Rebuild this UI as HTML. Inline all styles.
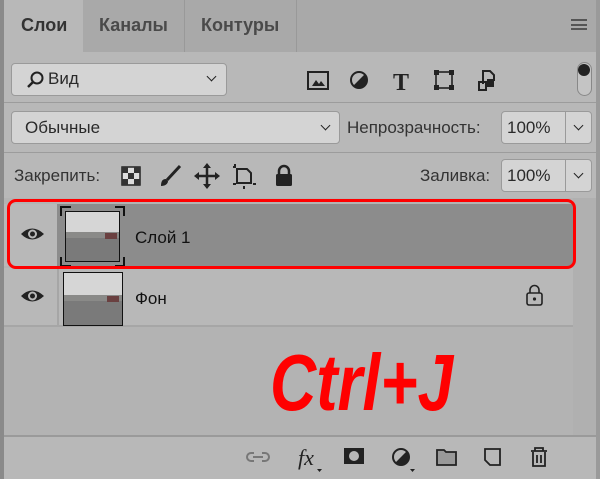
<!DOCTYPE html><html><head><meta charset="utf-8"><style>
*{margin:0;padding:0;box-sizing:border-box}
body{width:600px;height:479px;background:#b8b8b8;font-family:"Liberation Sans","DejaVu Sans",sans-serif;position:relative;overflow:hidden;color:#1e1e1e}
.a{position:absolute}
.box{position:absolute;background:#d4d4d4;border:1px solid #9a9a9a;border-radius:4px}
.chev{position:absolute;width:7px;height:7px;border-right:1.6px solid #222;border-bottom:1.6px solid #222;transform:rotate(45deg)}
.t{position:absolute;font-size:17px;color:#2a2a2a}
</style></head><body>
<div class="a" style="left:0;top:0;width:4px;height:479px;background:#8a8a8a"></div>
<div class="a" style="left:596px;top:0;width:4px;height:479px;background:#9a9a9a"></div>
<div class="a" style="left:4px;top:0;width:592px;height:52px;background:#a9a9a9"></div>
<div class="a" style="left:4px;top:0;width:79px;height:54px;background:#b8b8b8"></div>
<div class="a" style="left:184px;top:0;width:1px;height:52px;background:#999"></div>
<div class="a" style="left:296px;top:0;width:1px;height:52px;background:#999"></div>
<div class="t" style="left:21px;top:15px;font-weight:bold;font-size:18px;color:#333">Слои</div>
<div class="t" style="left:99px;top:15px;font-weight:bold;font-size:18px;color:#4a4a4a">Каналы</div>
<div class="t" style="left:201px;top:15px;font-weight:bold;font-size:18px;color:#4a4a4a">Контуры</div>
<div class="a" style="left:571px;top:19px;width:16px;height:11px;border-top:2px solid #555;border-bottom:2px solid #555"><div style="margin-top:2.5px;height:2px;background:#555"></div></div>

<div class="box" style="left:11px;top:63px;width:216px;height:33px"></div>
<svg class="a" style="left:26px;top:70px" width="20" height="20"><circle cx="11" cy="8" r="5.5" fill="none" stroke="#222" stroke-width="2"/><line x1="7" y1="12" x2="2" y2="17" stroke="#222" stroke-width="2.5"/></svg>
<div class="t" style="left:48px;top:69px">Вид</div>
<div class="chev" style="left:208px;top:73px"></div>
<svg class="a" style="left:305px;top:66px" width="200" height="28">
<rect x="3" y="6" width="20" height="17" fill="none" stroke="#222" stroke-width="2"/><path d="M7 20l4-6 3 4 2-3 4 5z" fill="#222"/>
<circle cx="54" cy="14" r="8" fill="none" stroke="#222" stroke-width="2"/><path d="M59.7 8.3A8 8 0 0 1 48.3 19.7z" fill="#222"/>
<text x="96" y="24" font-family="Liberation Serif" font-weight="bold" font-size="24" text-anchor="middle" fill="#222">T</text>
<rect x="131" y="6" width="16" height="16" fill="none" stroke="#222" stroke-width="1.6"/><g fill="#222"><rect x="129" y="4" width="5" height="5"/><rect x="144" y="4" width="5" height="5"/><rect x="129" y="19" width="5" height="5"/><rect x="144" y="19" width="5" height="5"/></g>
<path d="M178 18V5h7l4 4v6" fill="none" stroke="#222" stroke-width="2"/><rect x="174" y="16" width="7" height="8" fill="none" stroke="#222" stroke-width="2"/><rect x="182" y="13" width="7" height="8" fill="#222"/>
</svg>
<div class="a" style="left:577px;top:62px;width:15px;height:34px;border:1.5px solid #888;border-radius:8px;background:#c4c4c4"><div style="width:12px;height:12px;border-radius:6px;background:#222;margin-top:1px"></div></div>
<div class="a" style="left:4px;top:102px;width:592px;height:1px;background:#9c9c9c"></div>

<div class="box" style="left:11px;top:111px;width:329px;height:33px"></div>
<div class="t" style="left:25px;top:118px">Обычные</div>
<div class="chev" style="left:322px;top:122px"></div>
<div class="t" style="left:347px;top:118px;color:#333">Непрозрачность:</div>
<div class="box" style="left:501px;top:111px;width:91px;height:33px"></div>
<div class="a" style="left:565px;top:112px;width:1px;height:31px;background:#9a9a9a"></div>
<div class="t" style="left:507px;top:118px">100%</div>
<div class="chev" style="left:575px;top:122px"></div>
<div class="a" style="left:4px;top:152px;width:592px;height:1px;background:#9c9c9c"></div>

<div class="t" style="left:14px;top:166px;color:#333">Закрепить:</div>
<svg class="a" style="left:120px;top:162px" width="180" height="28">
<rect x="2" y="5" width="18" height="18" fill="#ddd" stroke="#222" stroke-width="1.5"/><g fill="#333"><rect x="2" y="5" width="6" height="6"/><rect x="14" y="5" width="6" height="6"/><rect x="8" y="11" width="6" height="6"/><rect x="2" y="17" width="6" height="6"/><rect x="14" y="17" width="6" height="6"/></g>
<path d="M60 4L47 18" stroke="#222" stroke-width="3"/><path d="M46 17c-4 0-5 3-5 7 4 0 7-2 7-5z" fill="#222"/>
<path d="M87 3v22M76 14h22" stroke="#222" stroke-width="2.5"/><path d="M87 1l-4 5h8zM87 27l-4-5h8zM74 14l5-4v8zM100 14l-5-4v8z" fill="#222"/>
<path d="M117 7h10l4 4v10h-14z" fill="none" stroke="#222" stroke-width="2"/><path d="M113 5h3M113 22h3M133 22h3M124 24v3M115 2v3" stroke="#222" stroke-width="2"/>
<rect x="156" y="12" width="16" height="12" rx="1.5" fill="#222"/><path d="M159 13v-4a5 5 0 0 1 10 0v4" fill="none" stroke="#222" stroke-width="2.5"/>
</svg>
<div class="t" style="left:420px;top:166px;color:#333">Заливка:</div>
<div class="box" style="left:501px;top:159px;width:91px;height:33px"></div>
<div class="a" style="left:565px;top:160px;width:1px;height:31px;background:#9a9a9a"></div>
<div class="t" style="left:507px;top:166px">100%</div>
<div class="chev" style="left:575px;top:170px"></div>

<div class="a" style="left:4px;top:198px;width:569px;height:239px;background:#b3b3b3"></div>
<div class="a" style="left:573px;top:198px;width:23px;height:239px;background:#b0b0b0"></div>
<div class="a" style="left:57px;top:204px;width:516px;height:62px;background:#8c8c8c"></div>
<div class="a" style="left:4px;top:204px;width:53px;height:62px;background:#b8b8b8"></div>
<div class="a" style="left:4px;top:268px;width:569px;height:57px;background:#b8b8b8"></div>
<div class="a" style="left:4px;top:325px;width:569px;height:2px;background:#a6a6a6"></div>
<div class="a" style="left:57px;top:268px;width:2px;height:58px;background:#a6a6a6"></div>
<div class="a" style="left:4px;top:435px;width:592px;height:2px;background:#9a9a9a"></div>

<svg class="a" style="left:20px;top:226px" width="26" height="16"><path d="M1 8Q12-3 24 8Q12 19 1 8z" fill="#222"/><circle cx="12.5" cy="8" r="4.5" fill="#b8b8b8"/><circle cx="12.5" cy="8" r="2.5" fill="#222"/></svg>
<svg class="a" style="left:20px;top:288px" width="26" height="16"><path d="M1 8Q12-3 24 8Q12 19 1 8z" fill="#222"/><circle cx="12.5" cy="8" r="4.5" fill="#b8b8b8"/><circle cx="12.5" cy="8" r="2.5" fill="#222"/></svg>

<svg class="a" style="left:60px;top:206px" width="66" height="62">
<path d="M1 10V1h10M55 1h9v9M1 51v9h10M55 60h9v-9" fill="none" stroke="#111" stroke-width="2"/>
<rect x="5" y="5" width="55" height="51" fill="#111"/>
<rect x="6" y="6" width="53" height="49" fill="#d6d6d6"/><rect x="6" y="30" width="53" height="25" fill="#7a7a7a"/><rect x="6" y="26" width="53" height="6" fill="#8a8a88"/><rect x="45" y="27" width="12" height="6" fill="#6a4040"/>
</svg>
<svg class="a" style="left:63px;top:272px" width="60" height="54">
<rect x="0" y="0" width="60" height="54" fill="#111"/>
<rect x="1" y="1" width="58" height="52" fill="#d6d6d6"/><rect x="1" y="27" width="58" height="26" fill="#7a7a7a"/><rect x="1" y="23" width="58" height="6" fill="#8a8a88"/><rect x="44" y="24" width="12" height="6" fill="#6a4040"/>
</svg>
<div class="t" style="left:135px;top:228px;color:#111">Слой 1</div>
<div class="t" style="left:135px;top:289px;color:#111">Фон</div>
<svg class="a" style="left:525px;top:284px" width="20" height="22"><rect x="2" y="9" width="15" height="12" rx="2" fill="none" stroke="#222" stroke-width="1.6"/><path d="M5 9V6a4.5 4.5 0 0 1 9 0v3" fill="none" stroke="#222" stroke-width="1.6"/><circle cx="9.5" cy="15" r="1.6" fill="#222"/></svg>

<div class="a" style="left:7px;top:199px;width:569px;height:70px;border:3px solid #f00;border-radius:9px"></div>

<div class="a" style="left:270px;top:343px;font-size:80px;font-weight:bold;font-style:italic;color:#f00;letter-spacing:0px;line-height:1;font-family:'Liberation Sans',sans-serif;transform:scaleX(0.8);transform-origin:left">Ctrl+J</div>

<svg class="a" style="left:240px;top:440px" width="320" height="34">
<path d="M14 13h-3a4 4 0 0 0 0 8h3M22 13h3a4 4 0 0 1 0 8h-3M13 17h10" fill="none" stroke="#777" stroke-width="2"/>
<text x="58" y="25" font-family="Liberation Serif" font-style="italic" font-size="22" fill="#222">fx</text><path d="M77 29h5l-2.5 3z" fill="#222"/>
<rect x="104" y="8" width="20" height="16" fill="#222"/><circle cx="114" cy="16" r="5" fill="#b8b8b8"/>
<circle cx="161" cy="17" r="8" fill="none" stroke="#222" stroke-width="2"/><path d="M166.7 11.3A8 8 0 0 1 155.3 22.7z" fill="#222"/><path d="M170 29h5l-2.5 3z" fill="#222"/>
<path d="M197 10h7l2 2h10v13h-19z" fill="#999" stroke="#222" stroke-width="1.8"/>
<path d="M245 9h15v16h-10l-5-5z" fill="none" stroke="#222" stroke-width="1.8"/>
<path d="M291 11h16M295 11V8h8v3M293 12v14h12V12M297 15v8M301 15v8" fill="none" stroke="#222" stroke-width="1.8"/>
</svg>
</body></html>
